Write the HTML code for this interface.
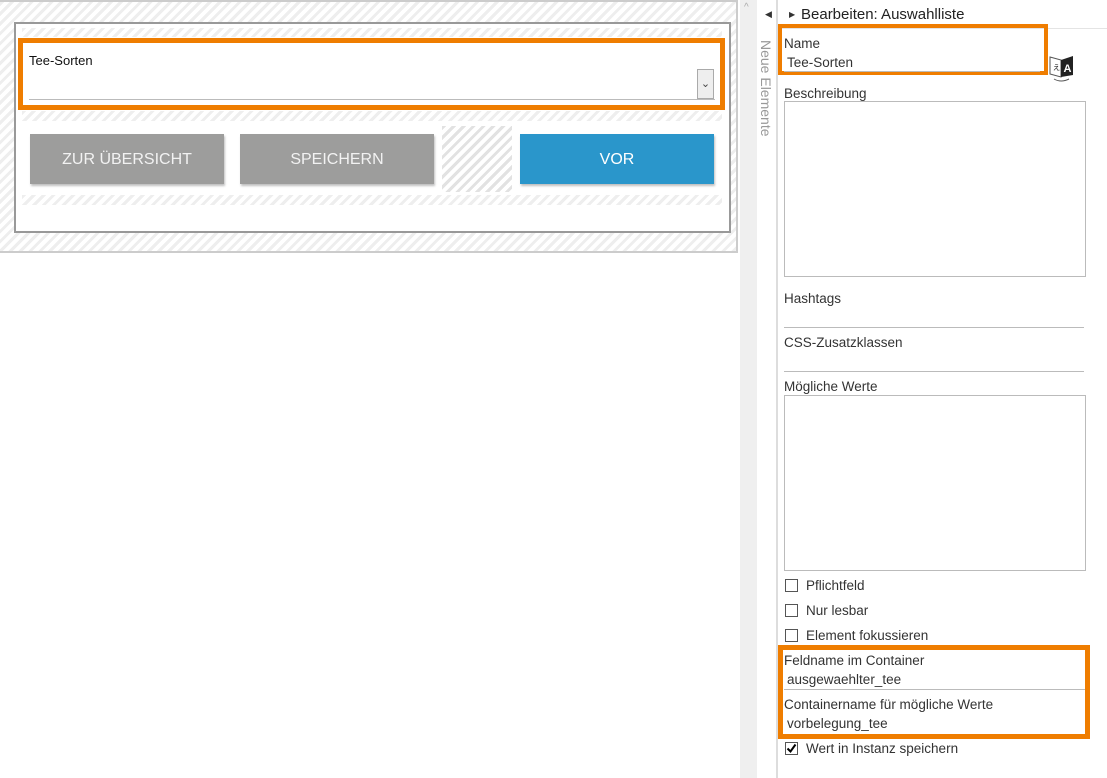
<!DOCTYPE html>
<html><head><meta charset="utf-8"><style>
*{box-sizing:border-box;margin:0;padding:0}
body{width:1107px;height:778px;background:#fff;font-family:"Liberation Sans",Arial,sans-serif;position:relative;overflow:hidden;color:#222}
.a{position:absolute}
.st{background:repeating-linear-gradient(135deg,#eee 0 3px,#fff 3px 7px)}
.st2{background:repeating-linear-gradient(135deg,#e2e2e2 0 3px,#fff 3px 7px)}
.btn{position:absolute;top:134px;height:50px;background:#9d9d9c;color:#f2f2f2;font-size:16px;display:flex;align-items:center;justify-content:center;box-shadow:1px 2px 2px rgba(0,0,0,.25);padding-top:2px}
.lbl{position:absolute;left:784px;font-size:13.5px;color:#333}
.cb{position:absolute;left:785px;width:13px;height:13px;border:1px solid #555;background:#fff}
.ln{position:absolute;left:784px;width:300px;height:1px;background:#bbb}
</style></head><body>
<div class="a st" style="left:0;top:0;width:738px;height:253px;border-top:2px solid #ccc;border-right:2px solid #ccc;border-bottom:2px solid #ccc"></div>
<div class="a" style="left:14px;top:22px;width:717px;height:211px;border:2px solid #999;background:#fff"></div>
<div class="a st" style="left:22px;top:28px;width:700px;height:9px"></div>
<div class="a st" style="left:22px;top:111px;width:700px;height:10px"></div>
<div class="a st" style="left:22px;top:195px;width:700px;height:10px"></div>
<div class="a" style="left:18px;top:38px;width:707px;height:72px;border:5px solid #ef7d00;background:#fff"></div>
<div class="a" style="left:29px;top:53px;font-size:13px;color:#111">Tee-Sorten</div>
<div class="a" style="left:29px;top:99px;width:686px;height:1px;background:#bbb"></div>
<div class="a" style="left:697px;top:69px;width:17px;height:30px;border:1px solid #aaa;background:#eee;font-size:11px;color:#444;text-align:center;line-height:28px">&#8964;</div>
<div class="btn" style="left:30px;width:194px">ZUR ÜBERSICHT</div>
<div class="btn" style="left:240px;width:194px">SPEICHERN</div>
<div class="a st2" style="left:442px;top:126px;width:70px;height:66px"></div>
<div class="btn" style="left:520px;width:194px;background:#2a96cb;color:#fff">VOR</div>
<div class="a" style="left:740px;top:0;width:17px;height:778px;background:#efefef"></div>
<div class="a" style="left:744px;top:2px;font-size:10px;color:#aaa">^</div>
<div class="a" style="left:757px;top:0;width:21px;height:778px;background:#fff;border-right:2px solid #ddd"></div>
<div class="a" style="left:765px;top:9px;font-size:9px;color:#333">&#9664;</div>
<div class="a" style="left:758px;top:40px;writing-mode:vertical-rl;font-size:14px;color:#999">Neue Elemente</div>
<div class="a" style="left:789px;top:10px;font-size:8px;color:#333">&#9654;</div>
<div class="a" style="left:801px;top:6px;font-size:15px;color:#222">Bearbeiten: Auswahlliste</div>
<div class="a" style="left:780px;top:28px;width:327px;height:1px;background:#e4e4e4"></div>
<div class="a" style="left:778px;top:24px;width:270px;height:51px;border:4px solid #ef7d00"></div>
<div class="lbl" style="top:36px">Name</div>
<div class="lbl" style="top:55px;left:787px">Tee-Sorten</div>
<div class="ln" style="top:71px;width:256px"></div>
<svg class="a" style="left:1049px;top:53px" width="26" height="30" viewBox="0 0 26 30"><path d="M1 4 L12 7 L12 24 L1 21Z" fill="#fff" stroke="#555"/><path d="M12 7 L24 3 L24 22 L12 24Z" fill="#222"/><text x="14.5" y="19" font-size="11" font-weight="bold" fill="#fff" font-family="Liberation Sans">A</text><text x="3" y="17" font-size="9" fill="#333">ぇ</text><path d="M5 26 Q12 30 20 26" fill="none" stroke="#555"/></svg>
<div class="lbl" style="top:86px">Beschreibung</div>
<div class="a" style="left:784px;top:101px;width:302px;height:176px;border:1px solid #bbb"></div>
<div class="lbl" style="top:291px">Hashtags</div>
<div class="ln" style="top:327px"></div>
<div class="lbl" style="top:335px">CSS-Zusatzklassen</div>
<div class="ln" style="top:371px"></div>
<div class="lbl" style="top:379px">Mögliche Werte</div>
<div class="a" style="left:784px;top:395px;width:302px;height:176px;border:1px solid #bbb"></div>
<div class="cb" style="top:579px"></div><div class="lbl" style="left:806px;top:578px">Pflichtfeld</div>
<div class="cb" style="top:604px"></div><div class="lbl" style="left:806px;top:603px">Nur lesbar</div>
<div class="cb" style="top:629px"></div><div class="lbl" style="left:806px;top:628px">Element fokussieren</div>
<div class="a" style="left:778px;top:645px;width:312px;height:94px;border:5px solid #ef7d00"></div>
<div class="lbl" style="top:653px">Feldname im Container</div>
<div class="lbl" style="top:672px;left:787px">ausgewaehlter_tee</div>
<div class="ln" style="top:689px;width:301px"></div>
<div class="lbl" style="top:697px">Containername für mögliche Werte</div>
<div class="lbl" style="top:716px;left:787px">vorbelegung_tee</div>
<div class="cb" style="top:742px"></div>
<svg class="a" style="left:786px;top:743px" width="11" height="11" viewBox="0 0 11 11"><path d="M1.5 5.5 L4.5 8.5 L9.5 1.5" fill="none" stroke="#000" stroke-width="2"/></svg>
<div class="lbl" style="left:806px;top:741px">Wert in Instanz speichern</div>
</body></html>
